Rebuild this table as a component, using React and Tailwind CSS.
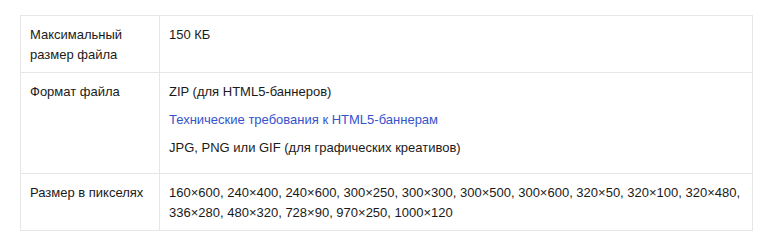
export default function App() {
  const rowCls = "grid grid-cols-[139px_1fr] divide-x divide-[#e6e6e6]";
  return (
    <div className="bg-white w-[763px] h-[240px] pt-[15px] pl-[20px] font-['Liberation_Sans',Arial,sans-serif] text-[13px] leading-[20px] text-[#1a1a1a]">
      <div className="w-[733px] border border-[#e6e6e6] divide-y divide-[#e6e6e6]">
        <div className={rowCls}>
          <div className="px-[9px] pt-[9px] pb-[7px]">Максимальный размер файла</div>
          <div className="px-[9px] pt-[9px] pb-[7px]">150 КБ</div>
        </div>
        <div className={rowCls}>
          <div className="px-[9px] pt-[9px] pb-[7px]">Формат файла</div>
          <div className="px-[9px] pt-[9px] pb-[7px] flex flex-col gap-[8px]">
            <p>ZIP (для HTML5-баннеров)</p>
            <p className="text-[#3553cc]">Технические требования к HTML5-баннерам</p>
            <p className="mb-[8px]">JPG, PNG или GIF (для графических креативов)</p>
          </div>
        </div>
        <div className={rowCls}>
          <div className="px-[9px] pt-[9px] pb-[7px]">Размер в пикселях</div>
          <div className="px-[9px] pt-[9px] pb-[7px]">
            160×600, 240×400, 240×600, 300×250, 300×300, 300×500, 300×600, 320×50, 320×100, 320×480, 336×280, 480×320, 728×90, 970×250, 1000×120
          </div>
        </div>
      </div>
    </div>
  );
}
